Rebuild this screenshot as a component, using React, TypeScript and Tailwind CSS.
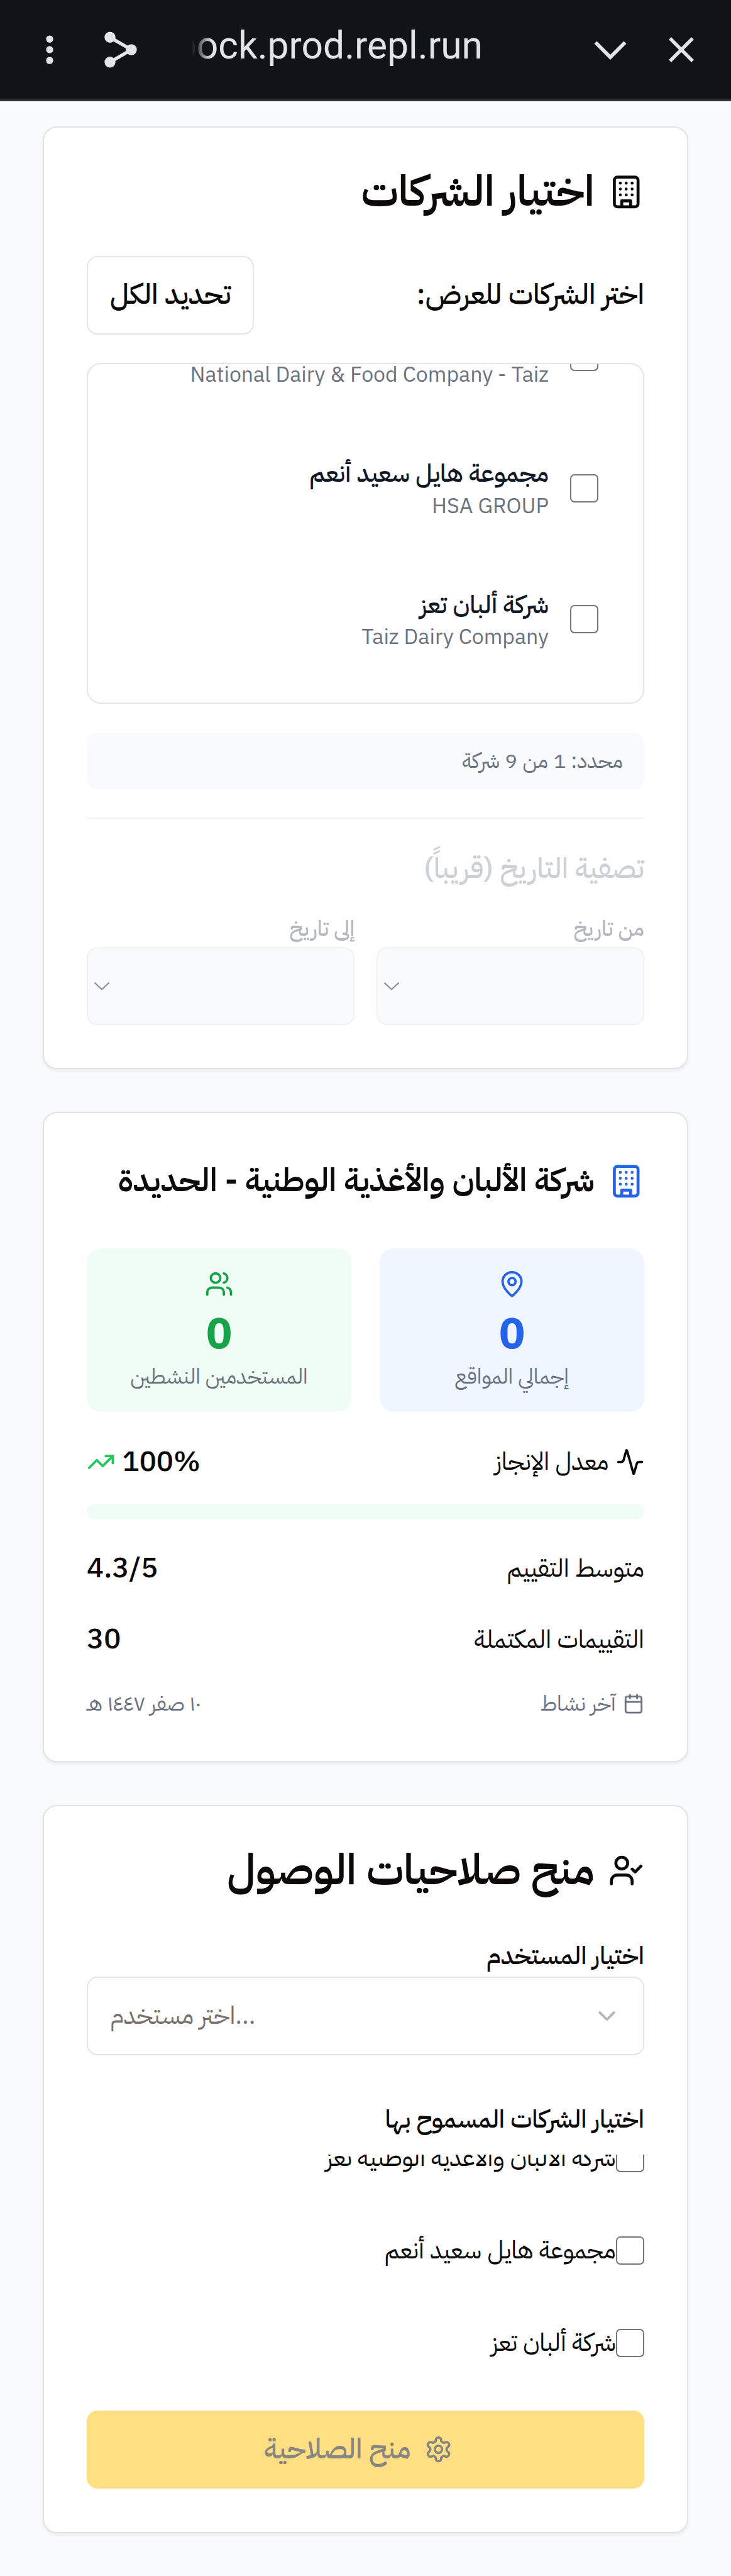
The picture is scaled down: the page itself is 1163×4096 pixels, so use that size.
import React from "react";
import type { ReactNode } from "react";
import { Activity, Calendar, ChevronDown, MapPin, TrendingUp, UserCheck, Users } from "lucide-react";

function BuildingIcon({ className }: { className: string }) {
  return (
    <svg viewBox="0 0 24 24" fill="none" stroke="currentColor" strokeWidth="2" strokeLinecap="round" strokeLinejoin="round" className={className}>
      <rect width="16" height="20" x="4" y="2" rx="2" ry="2" />
      <path d="M9 22v-4h6v4M8 6h.01M16 6h.01M12 6h.01M12 10h.01M12 14h.01M16 10h.01M16 14h.01M8 10h.01M8 14h.01" />
    </svg>
  );
}

function GearIcon({ className }: { className: string }) {
  return (
    <svg viewBox="0 0 24 24" fill="none" stroke="currentColor" strokeWidth="2" strokeLinecap="round" strokeLinejoin="round" className={className}>
      <path d="M12.22 2h-.44a2 2 0 0 0-2 2v.18a2 2 0 0 1-1 1.73l-.43.25a2 2 0 0 1-2 0l-.15-.08a2 2 0 0 0-2.73.73l-.22.38a2 2 0 0 0 .73 2.73l.15.1a2 2 0 0 1 1 1.72v.51a2 2 0 0 1-1 1.74l-.15.09a2 2 0 0 0-.73 2.73l.22.38a2 2 0 0 0 2.73.73l.15-.08a2 2 0 0 1 2 0l.43.25a2 2 0 0 1 1 1.73V20a2 2 0 0 0 2 2h.44a2 2 0 0 0 2-2v-.18a2 2 0 0 1 1-1.73l.43-.25a2 2 0 0 1 2 0l.15.08a2 2 0 0 0 2.73-.73l.22-.39a2 2 0 0 0-.73-2.73l-.15-.08a2 2 0 0 1-1-1.74v-.5a2 2 0 0 1 1-1.74l.15-.09a2 2 0 0 0 .73-2.73l-.22-.38a2 2 0 0 0-2.73-.73l-.15.08a2 2 0 0 1-2 0l-.43-.25a2 2 0 0 1-1-1.73V4a2 2 0 0 0-2-2z" />
      <circle cx="12" cy="12" r="3" />
    </svg>
  );
}

function BrowserBar() {
  return (
    <header dir="ltr" className="flex h-[161.2px] items-start border-b-[3px] border-[#303338] bg-[#101318] text-[#e3e3e8]">
      <svg viewBox="0 0 12 46" fill="currentColor" className="mt-[56px] ml-[73px] h-[46px] w-[12px]">
        <circle cx="6" cy="6.1" r="5.7" />
        <circle cx="6" cy="23" r="5.7" />
        <circle cx="6" cy="40.1" r="5.7" />
      </svg>
      <svg viewBox="0 0 54 58" fill="currentColor" className="mt-[50px] ml-[80px] h-[58px] w-[54px]">
        <path d="M10 9.4 44 29 10 48.8" fill="none" stroke="currentColor" strokeWidth="5.4" />
        <circle cx="10" cy="9.2" r="8.7" />
        <circle cx="10" cy="48.8" r="8.7" />
        <circle cx="44" cy="29" r="8.7" />
      </svg>
      <div className="mt-[30px] ml-[85.5px] flex h-[90px] w-[463.5px] justify-end overflow-hidden [mask-image:linear-gradient(to_right,transparent,black_32px)]">
        <span className="font-[Roboto] text-[60.5px] leading-[86px] whitespace-nowrap">bock.prod.repl.run</span>
      </div>
      <svg viewBox="0 0 52 30" fill="none" stroke="currentColor" strokeWidth="5.8" className="mt-[64.5px] ml-[177px] h-[30px] w-[52px]">
        <path d="M2.5 2.5 26 26 49.5 2.5" />
      </svg>
      <svg viewBox="0 0 40 40" fill="none" stroke="currentColor" strokeWidth="5.4" className="mt-[59px] ml-[66.5px] h-[40px] w-[40px]">
        <path d="M2 2 38 38M38 2 2 38" />
      </svg>
    </header>
  );
}

function Card({ children }: { children: ReactNode }) {
  return (
    <section className="rounded-lg border-[2px] border-[#e5e3e2] bg-white p-[68.25px] shadow-[0_2.83px_5.65px_rgba(0,0,0,0.06)]">{children}</section>
  );
}

function Checkbox() {
  return <span className="size-4 shrink-0 rounded-[7px] border-[2.83px] border-[#767676] bg-white" />;
}

function CompanyOption({ name, english }: { name: string; english: string }) {
  return (
    <div className="flex h-[208.4px] shrink-0 items-center gap-3 px-[70.8px]">
      <Checkbox />
      <div>
        <p className="text-sm font-medium text-[#111827]">{name}</p>
        <p className="text-xs text-[#6b7280]">{english}</p>
      </div>
    </div>
  );
}

function DateField({ label }: { label: string }) {
  return (
    <div className="flex flex-col">
      <p className="h-5 text-xs leading-[56px] font-medium text-[#6b7280]">{label}</p>
      <div className="flex h-11 items-center justify-end rounded-md border-[2px] border-[#e5e5e5] bg-[#f4f6f8] pl-[9px]">
        <svg viewBox="0 0 26 14" fill="none" stroke="#222" strokeWidth="2.2" className="h-[14px] w-[26px]">
          <path d="M1.5 1.5 13 12.3 24.5 1.5" />
        </svg>
      </div>
    </div>
  );
}

function Row({ label, value }: { label: ReactNode; value: ReactNode }) {
  return (
    <div className="flex h-6 items-center justify-between text-[#0c0a09]">
      <span className="flex items-center gap-1 text-sm">{label}</span>
      <span dir="ltr" className="flex items-center gap-1 text-base font-medium">{value}</span>
    </div>
  );
}

function CompanyCheck({ name }: { name: string }) {
  return (
    <div className="flex h-11 shrink-0 items-center">
      <Checkbox />
      <span className="text-sm text-[#0c0a09]">{name}</span>
    </div>
  );
}

export default function App() {
  return (
    <div
      dir="rtl"
      className="h-[4096px] overflow-hidden bg-[#f9fafb] font-['IBM_Plex_Sans_Arabic','IBM_Plex_Sans','Noto_Sans_Arabic','Noto_Sans',sans-serif] text-[#0c0a09] [--radius-lg:22.6px] [--radius-md:17px] [--spacing:11.3075px] [--text-base:45.23px] [--text-lg:50.88px] [--text-sm:39.58px] [--text-xs:33.92px] [--text-2xl:67.85px]"
    >
      <BrowserBar />
      <main className="flex flex-col gap-6 px-6 pt-[40px]">
        <Card>
          <h2 className="mb-6 flex h-6 items-center gap-2 text-2xl leading-none font-semibold">
            <BuildingIcon className="size-5" />
            اختيار الشركات
          </h2>
          <div className="flex flex-col gap-4">
            <div className="flex items-center justify-between">
              <span className="text-base font-medium">اختر الشركات للعرض:</span>
              <button className="flex h-11 items-center rounded-md border-[2.83px] border-[#e5e5e5] px-[34.8px] text-base font-medium">تحديد الكل</button>
            </div>
            <div className="h-48 overflow-hidden rounded-lg border-[2.83px] border-[#e5e5e5]">
              <div className="mt-[-115.1px] flex flex-col">
                <CompanyOption name="شركة الألبان والأغذية الوطنية تعز" english="National Dairy & Food Company - Taiz" />
                <CompanyOption name="مجموعة هايل سعيد أنعم" english="HSA GROUP" />
                <CompanyOption name="شركة ألبان تعز" english="Taiz Dairy Company" />
              </div>
            </div>
            <p className="rounded-md bg-[#f9fafb] px-3 py-2 text-xs text-[#6b7280]">محدد: 1 من 9 شركة</p>
            <div className="border-t-[2px] border-[#e5e5e5] pt-[46px] opacity-50">
              <h3 className="mb-[32.9px] text-base font-medium text-[#9ca3af]">تصفية التاريخ (قريباً)</h3>
              <div className="grid grid-cols-2 gap-[34.2px]">
                <DateField label="من تاريخ" />
                <DateField label="إلى تاريخ" />
              </div>
            </div>
          </div>
        </Card>

        <Card>
          <h2 className="mb-6 flex h-7 items-center gap-2 text-lg font-semibold whitespace-nowrap">
            <BuildingIcon className="size-5 shrink-0 text-[#2563eb]" />
            شركة الألبان والأغذية الوطنية - الحديدة
          </h2>
          <div className="grid grid-cols-2 gap-4 text-center">
            <div className="rounded-lg bg-[#eff6ff] p-3">
              <MapPin className="mx-auto mb-1 size-4 text-[#2563eb]" />
              <p className="text-2xl font-bold text-[#2563eb]">0</p>
              <p className="text-xs text-[#6b7280]">إجمالي المواقع</p>
            </div>
            <div className="rounded-lg bg-[#f0fdf4] p-3">
              <Users className="mx-auto mb-1 size-4 text-[#16a34a]" />
              <p className="text-2xl font-bold text-[#16a34a]">0</p>
              <p className="text-xs text-[#6b7280]">المستخدمين النشطين</p>
            </div>
          </div>
          <div className="mt-4 flex flex-col gap-4">
            <div className="flex flex-col gap-3">
              <Row
                label={<><Activity className="size-4" />معدل الإنجاز</>}
                value={<><TrendingUp className="size-4 text-[#22c55e]" />100%</>}
              />
              <div className="h-2 rounded-full bg-[#f0fdf4]" />
            </div>
            <Row label="متوسط التقييم" value="4.3/5" />
            <Row label="التقييمات المكتملة" value="30" />
            <div className="flex h-4 items-center justify-between text-xs text-[#6b7280]">
              <span className="flex items-center gap-1"><Calendar className="size-3" />آخر نشاط</span>
              <span>١٠ صفر ١٤٤٧ هـ</span>
            </div>
          </div>
        </Card>

        <Card>
          <h2 className="mb-6 flex h-6 items-center gap-2 text-2xl leading-none font-semibold">
            <UserCheck className="size-5" />
            منح صلاحيات الوصول
          </h2>
          <p className="h-6 text-sm leading-[67.8px] font-medium">اختيار المستخدم</p>
          <div className="flex h-11 items-center justify-between rounded-md border-[2.83px] border-[#e5e5e5] px-[34.8px]">
            <ChevronDown className="size-4 text-[#b5b5b5]" />
            <span dir="ltr" className="text-sm text-[#78716c]">اختر مستخدم...</span>
          </div>
          <p className="mt-6 h-6 text-sm leading-[67.8px] font-medium">اختيار الشركات المسموح بها</p>
          <div className="mt-2 h-[339px] overflow-hidden">
            <div className="mt-[-57px] flex flex-col gap-2">
              <CompanyCheck name="شركة الألبان والأغذية الوطنية تعز" />
              <CompanyCheck name="مجموعة هايل سعيد أنعم" />
              <CompanyCheck name="شركة ألبان تعز" />
            </div>
          </div>
          <button className="mt-6 flex h-11 w-full items-center justify-center gap-2 rounded-md bg-[#ffdf82] text-base font-medium text-[#878683]">
            <GearIcon className="mr-2 size-4" />
            <span className="-mr-px">منح الصلاحية</span>
          </button>
        </Card>
      </main>
    </div>
  );
}
